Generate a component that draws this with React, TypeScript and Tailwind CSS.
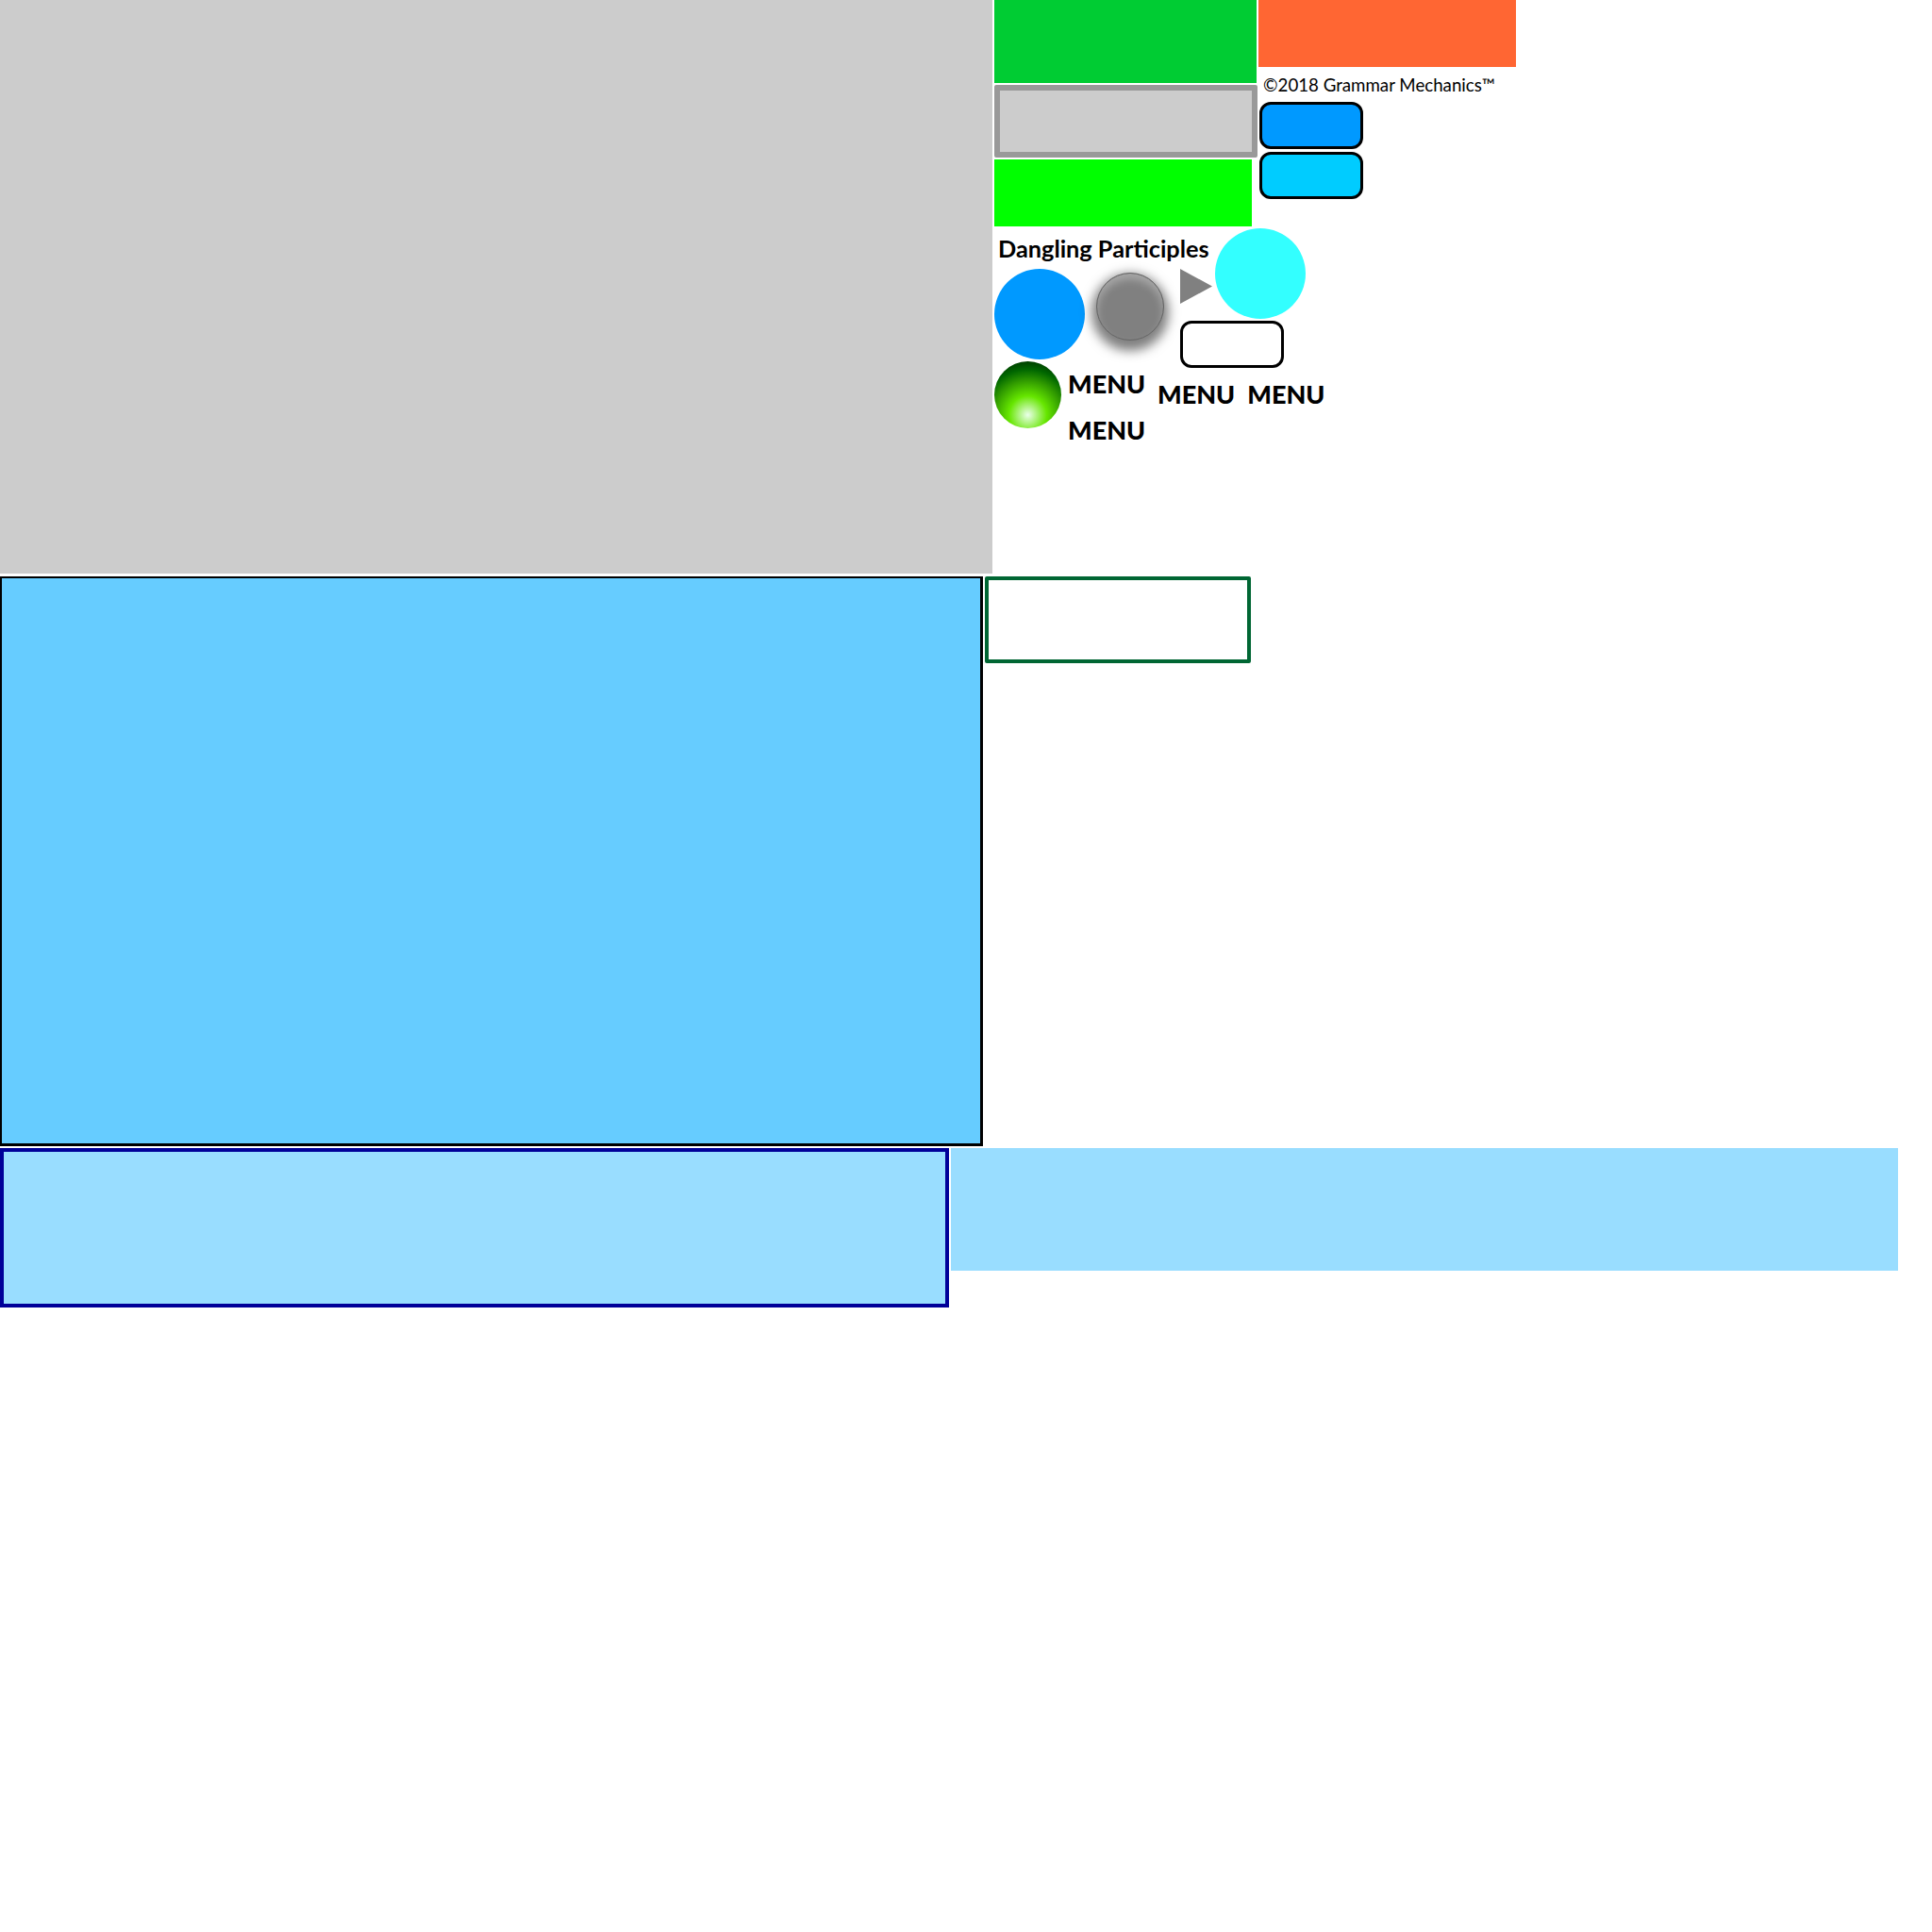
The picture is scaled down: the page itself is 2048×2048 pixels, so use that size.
const comic = "font-['Lato','Open_Sans','DejaVu_Sans',sans-serif] text-black";

const Menu = ({ className = '' }: { className?: string }) => (
  <span className={`block font-black text-[27px] leading-[36px] ${comic} ${className}`}>MENU</span>
);

const Pill = ({ color }: { color: string }) => (
  <div className={`w-[110px] h-[50px] rounded-[12px] border-[3px] border-black ${color}`} />
);

const Triangle = () => (
  <svg width="34" height="37" viewBox="0 0 34 37" className="block shrink-0">
    <polygon points="0,0 34,18.5 0,37" fill="#808080" />
  </svg>
);

export default function App() {
  return (
    <div className="w-[2048px] h-[2048px] bg-white overflow-hidden">
      {/* top band */}
      <div className="flex h-[608px]">
        <div className="w-[1052px] h-[608px] bg-[#cccccc]" />
        <div className="ml-[2px] w-[280px] flex flex-col">
          <div className="h-[88px] w-[278px] bg-[#00cc33]" />
          <div className="mt-[2px] h-[77px] w-[279px] bg-[#cccccc] border-[6px] border-[#999999] rounded-[2px]" />
          <div className="mt-[2px] h-[71px] w-[273px] bg-[#00ff00]" />
          <div className="flex">
            <div className="w-[197px] shrink-0 flex flex-col">
              <div className="h-[45px] pl-[4px] pt-[8px]">
                <span className={`block whitespace-nowrap font-bold text-[25.3px] leading-[30px] ${comic}`}>Dangling Participles</span>
              </div>
              <div className="flex">
                <div className="w-[96px] h-[96px] rounded-full bg-[#0099ff]" />
                <div className="ml-[12px] mt-[4px] w-[72px] h-[72px] rounded-full bg-[#808080] border border-[#666666] shadow-[0_6px_12px_5px_rgba(0,0,0,0.5),inset_0_6px_8px_rgba(255,255,255,0.3)]" />
              </div>
              <div className="mt-[2px] flex">
                <div className="w-[71px] h-[71px] rounded-full bg-[radial-gradient(circle_at_50%_80%,#eaffea_0%,#66e600_30%,#2f9900_55%,#006600_72%,#004000_85%)]" />
                <div className="ml-[7px] mt-[6px] flex flex-col gap-[13px]">
                  <Menu />
                  <Menu />
                </div>
              </div>
            </div>
            <div className="flex flex-col">
              <div className="flex">
                <div className="mt-[45px]">
                  <Triangle />
                </div>
                <div className="ml-[3px] mt-[2px] w-[96px] h-[96px] rounded-full bg-[#33ffff]" />
              </div>
              <div className="mt-[2px] w-[110px] h-[50px] rounded-[12px] border-[3px] border-black bg-white" />
              <div className="mt-[10px] -ml-[24px] flex gap-[13px]">
                <Menu />
                <Menu />
              </div>
            </div>
          </div>
        </div>
        <div className="w-[273px] flex flex-col">
          <div className="h-[71px] w-[273px] bg-[#ff6633]" />
          <span className={`block whitespace-nowrap ml-[5px] mt-[7px] text-[18.7px] leading-[24px] ${comic}`}>©2018 Grammar Mechanics™</span>
          <div className="ml-[1px] mt-[6px] flex flex-col gap-[3px]">
            <Pill color="bg-[#0099ff]" />
            <Pill color="bg-[#00ccff]" />
          </div>
        </div>
      </div>
      <div className="mt-[3px] flex items-start">
        <div className="w-[1042px] h-[604px] bg-[#66ccff] border-2 border-r-[3px] border-b-[3px] border-black" />
        <div className="ml-[2px] w-[282px] h-[92px] border-[4px] border-[#006633] rounded-[2px]" />
      </div>
      <div className="mt-[2px] flex items-start">
        <div className="w-[1006px] h-[169px] bg-[#99ddff] border-[4px] border-[#000099]" />
        <div className="ml-[2px] w-[1004px] h-[130px] bg-[#99ddff]" />
      </div>
    </div>
  );
}
